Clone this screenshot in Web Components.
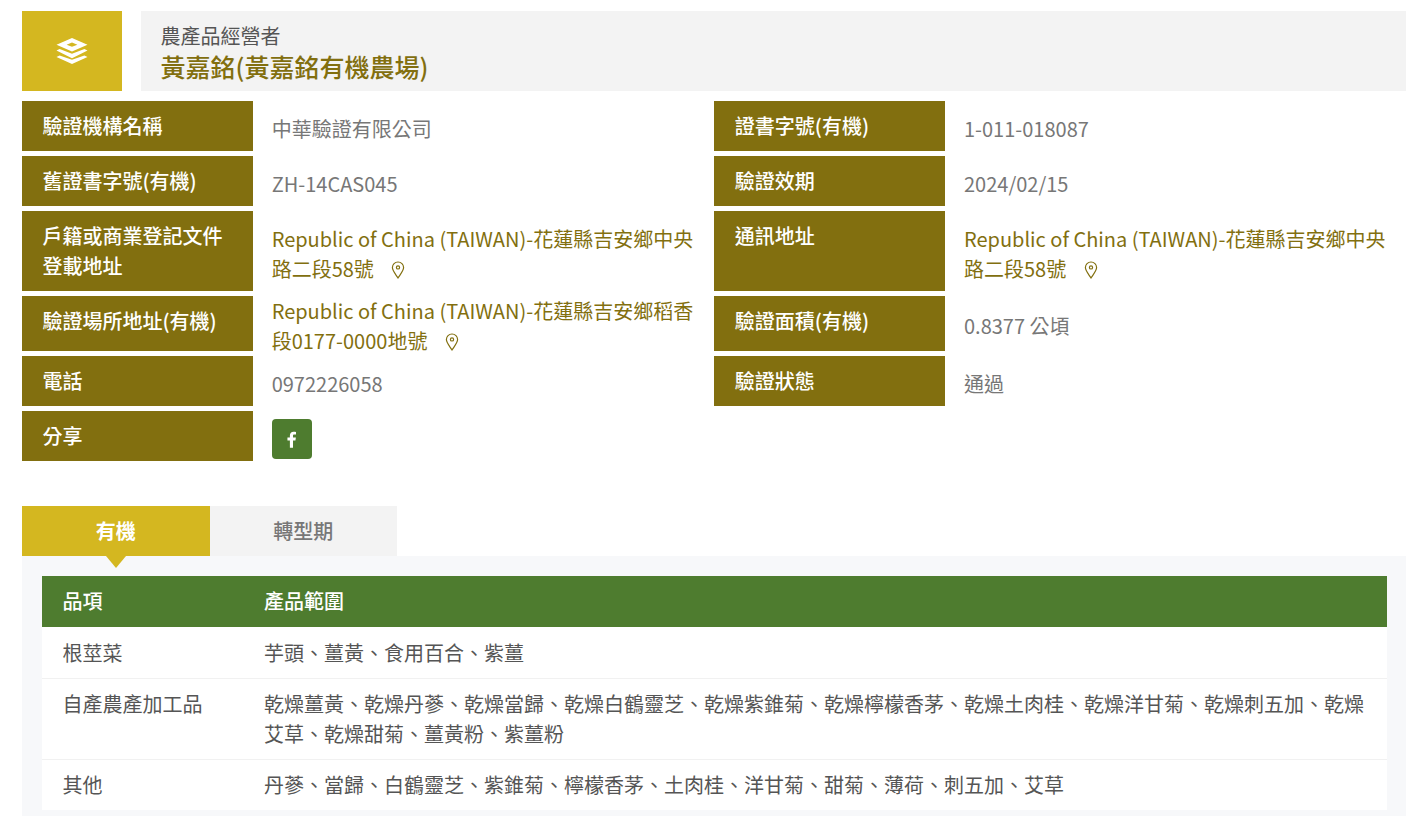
<!DOCTYPE html>
<html lang="zh-Hant">
<head>
<meta charset="utf-8">
<title>農產品經營者</title>
<style>
  html, body {
    margin: 0;
    background: #fff;
    font-family: "Noto Sans CJK TC", "Noto Sans", sans-serif;
    font-size: 20px;
    line-height: 30px;
    color: #555;
  }
  body { padding: 11px 20px 0 22px; height: 805px; overflow: hidden; }
</style>
</head>
<body>
  <operator-header kind="農產品經營者" name="黃嘉銘(黃嘉銘有機農場)"></operator-header>

  <info-grid>
    <info-row label="驗證機構名稱">中華驗證有限公司</info-row>
    <info-row label="證書字號(有機)">1-011-018087</info-row>
    <info-row label="舊證書字號(有機)">ZH-14CAS045</info-row>
    <info-row label="驗證效期">2024/02/15</info-row>
    <info-row label="戶籍或商業登記文件登載地址" height="80"><map-link>Republic of China (TAIWAN)-花蓮縣吉安鄉中央路二段58號</map-link></info-row>
    <info-row label="通訊地址" height="80"><map-link>Republic of China (TAIWAN)-花蓮縣吉安鄉中央路二段58號</map-link></info-row>
    <info-row label="驗證場所地址(有機)" height="55" flush><map-link>Republic of China (TAIWAN)-花蓮縣吉安鄉稻香段0177-0000地號</map-link></info-row>
    <info-row label="驗證面積(有機)" height="55" low>0.8377 公頃</info-row>
    <info-row label="電話">0972226058</info-row>
    <info-row label="驗證狀態">通過</info-row>
    <info-row label="分享" flush><share-button></share-button></info-row>
  </info-grid>

  <tab-bar>
    <tab-item active>有機</tab-item>
    <tab-item>轉型期</tab-item>
  </tab-bar>

  <tab-panel>
    <product-table>
      <product-row head name="品項">產品範圍</product-row>
      <product-row name="根莖菜">芋頭、薑黃、食用百合、紫薑</product-row>
      <product-row name="自產農產加工品">乾燥薑黃、乾燥丹蔘、乾燥當歸、乾燥白鶴靈芝、乾燥紫錐菊、乾燥檸檬香茅、乾燥土肉桂、乾燥洋甘菊、乾燥刺五加、乾燥艾草、乾燥甜菊、薑黃粉、紫薑粉</product-row>
      <product-row name="其他">丹蔘、當歸、白鶴靈芝、紫錐菊、檸檬香茅、土肉桂、洋甘菊、甜菊、薄荷、刺五加、艾草</product-row>
    </product-table>
  </tab-panel>

<script>
  const operatorHeaderTemplate = document.createElement("template");
  operatorHeaderTemplate.innerHTML = `
    <style>
      :host { display: flex; gap: 19px; height: 80px; }
      .icon {
        flex: 0 0 100px;
        display: flex;
        align-items: center;
        justify-content: center;
        background: #d4b720;
      }
      .text {
        flex: 1;
        background: #f3f3f3;
        padding: 10px 20px 0 19.6px;
      }
      .kind { font-size: 20px; line-height: 30px; color: #555; }
      .name { font-size: 25px; line-height: 30px; font-weight: 500; color: #826f0f; }
    </style>
    <div class="icon">
      <svg width="32" height="26" viewBox="0 0 32 26">
        <path fill="#fff" fill-rule="evenodd" d="M16 0 31.5 6.7 16 13.4.5 6.7zM16 4.6 10.6 6.7 16 8.8 21.4 6.7z"/>
        <path fill="#fff" d="M.5 12.6 3.6 11 16 15.8 28.4 11 31.5 12.6 16 20.2zM.5 19 3.6 17.4 16 21.8 28.4 17.4 31.5 19 16 26z"/>
      </svg>
    </div>
    <div class="text">
      <div class="kind"></div>
      <div class="name"></div>
    </div>
  `;

  customElements.define(
    "operator-header",
    class OperatorHeader extends HTMLElement {
      constructor() {
        super();
        this.attachShadow({ mode: "open" });
        this.shadowRoot.appendChild(operatorHeaderTemplate.content.cloneNode(true));
      }

      connectedCallback() {
        this.shadowRoot.querySelector(".kind").textContent = this.getAttribute("kind");
        this.shadowRoot.querySelector(".name").textContent = this.getAttribute("name");
      }
    }
  );

  const infoGridTemplate = document.createElement("template");
  infoGridTemplate.innerHTML = `
    <style>
      :host {
        display: grid;
        grid-template-columns: 692.33px 691.67px;
        row-gap: 5px;
        margin-top: 10px;
      }
    </style>
    <slot></slot>
  `;

  customElements.define(
    "info-grid",
    class InfoGrid extends HTMLElement {
      constructor() {
        super();
        this.attachShadow({ mode: "open" });
        this.shadowRoot.appendChild(infoGridTemplate.content.cloneNode(true));
      }
    }
  );

  const infoRowTemplate = document.createElement("template");
  infoRowTemplate.innerHTML = `
    <style>
      :host { display: flex; min-height: 50px; }
      .label {
        flex: 0 0 230.67px;
        box-sizing: border-box;
        padding: 10px 20px 10px 20.5px;
        background: #826f0f;
        color: #fff;
        font-weight: 500;
      }
      .value {
        flex: 1;
        min-width: 0;
        padding: 13px 18.5px 0 19px;
        color: #777;
      }
      :host([flush]) .value { padding-top: 0; }
      :host([low]) .value { padding-top: 15px; }
    </style>
    <div class="label"></div>
    <div class="value"><slot></slot></div>
  `;

  customElements.define(
    "info-row",
    class InfoRow extends HTMLElement {
      constructor() {
        super();
        this.attachShadow({ mode: "open" });
        this.shadowRoot.appendChild(infoRowTemplate.content.cloneNode(true));
      }

      connectedCallback() {
        this.shadowRoot.querySelector(".label").textContent = this.getAttribute("label");
        if (this.hasAttribute("height")) {
          this.style.height = this.getAttribute("height") + "px";
        }
      }
    }
  );

  const mapLinkTemplate = document.createElement("template");
  mapLinkTemplate.innerHTML = `
    <style>
      :host { display: inline; color: #826f0f; }
      svg { margin-left: 13px; vertical-align: -2px; }
    </style>
    <slot></slot>
    <svg width="14" height="18" viewBox="0 0 14 18" fill="none" stroke="#826f0f" stroke-width="1.2">
      <path d="M7 17C4.4 13 1.4 9.6 1.4 6.6a5.6 5.6 0 0 1 11.2 0C12.6 9.6 9.6 13 7 17z"/>
      <circle cx="7" cy="6.4" r="1.6"/>
    </svg>
  `;

  customElements.define(
    "map-link",
    class MapLink extends HTMLElement {
      constructor() {
        super();
        this.attachShadow({ mode: "open" });
        this.shadowRoot.appendChild(mapLinkTemplate.content.cloneNode(true));
      }
    }
  );

  const shareButtonTemplate = document.createElement("template");
  shareButtonTemplate.innerHTML = `
    <style>
      :host {
        display: flex;
        align-items: center;
        justify-content: center;
        width: 40px;
        height: 40px;
        margin-top: 8px;
        border-radius: 4px;
        background: #4e7c2f;
      }
    </style>
    <svg width="10" height="17" viewBox="0 0 9 15">
      <path fill="#fff" d="M2.6 15V8.4H.4V5.8h2.2V3.9C2.6 1.7 3.9.5 5.9.5c.9 0 1.8.1 2.2.2v2.3H6.7c-1 0-1.3.5-1.3 1.2v1.6h2.6l-.4 2.6H5.4V15z"/>
    </svg>
  `;

  customElements.define(
    "share-button",
    class ShareButton extends HTMLElement {
      constructor() {
        super();
        this.attachShadow({ mode: "open" });
        this.shadowRoot.appendChild(shareButtonTemplate.content.cloneNode(true));
      }
    }
  );

  const tabBarTemplate = document.createElement("template");
  tabBarTemplate.innerHTML = `
    <style>
      :host { display: flex; margin-top: 45px; width: 375px; }
    </style>
    <slot></slot>
  `;

  customElements.define(
    "tab-bar",
    class TabBar extends HTMLElement {
      constructor() {
        super();
        this.attachShadow({ mode: "open" });
        this.shadowRoot.appendChild(tabBarTemplate.content.cloneNode(true));
      }
    }
  );

  const tabItemTemplate = document.createElement("template");
  tabItemTemplate.innerHTML = `
    <style>
      :host {
        position: relative;
        z-index: 1;
        display: block;
        flex: 1;
        height: 50px;
        line-height: 50px;
        text-align: center;
        background: #f3f3f3;
        color: #777;
        font-weight: 500;
      }
      :host([active]) { background: #d4b720; color: #fff; font-weight: 700; }
      :host([active])::after {
        content: "";
        position: absolute;
        left: 50%;
        top: 100%;
        margin-left: -10px;
        border-style: solid;
        border-width: 12px 10px 0;
        border-color: #d4b720 transparent transparent;
      }
    </style>
    <slot></slot>
  `;

  customElements.define(
    "tab-item",
    class TabItem extends HTMLElement {
      constructor() {
        super();
        this.attachShadow({ mode: "open" });
        this.shadowRoot.appendChild(tabItemTemplate.content.cloneNode(true));
      }
    }
  );

  const tabPanelTemplate = document.createElement("template");
  tabPanelTemplate.innerHTML = `
    <style>
      :host {
        display: block;
        padding: 20px 19px 6px 20px;
        background: #f7f8fa;
      }
    </style>
    <slot></slot>
  `;

  customElements.define(
    "tab-panel",
    class TabPanel extends HTMLElement {
      constructor() {
        super();
        this.attachShadow({ mode: "open" });
        this.shadowRoot.appendChild(tabPanelTemplate.content.cloneNode(true));
      }
    }
  );

  const productTableTemplate = document.createElement("template");
  productTableTemplate.innerHTML = `
    <style>
      :host { display: block; background: #fff; }
    </style>
    <slot></slot>
  `;

  customElements.define(
    "product-table",
    class ProductTable extends HTMLElement {
      constructor() {
        super();
        this.attachShadow({ mode: "open" });
        this.shadowRoot.appendChild(productTableTemplate.content.cloneNode(true));
      }
    }
  );

  const productRowTemplate = document.createElement("template");
  productRowTemplate.innerHTML = `
    <style>
      :host {
        display: grid;
        grid-template-columns: 202px 1fr;
        border-top: 1px solid #f1f1f1;
        color: #555;
      }
      :host([head]) { background: #4e7c2f; color: #fff; font-weight: 500; border-top: 0; padding-bottom: 1px; }
      .cell { padding: 10px 20px; }
      .name { padding-left: 20.5px; }
    </style>
    <div class="cell name"></div>
    <div class="cell"><slot></slot></div>
  `;

  customElements.define(
    "product-row",
    class ProductRow extends HTMLElement {
      constructor() {
        super();
        this.attachShadow({ mode: "open" });
        this.shadowRoot.appendChild(productRowTemplate.content.cloneNode(true));
      }

      connectedCallback() {
        this.shadowRoot.querySelector(".name").textContent = this.getAttribute("name");
        if (this.previousElementSibling && this.previousElementSibling.hasAttribute("head")) {
          this.style.borderTopColor = "#fff";
        }
      }
    }
  );
</script>
</body>
</html>
